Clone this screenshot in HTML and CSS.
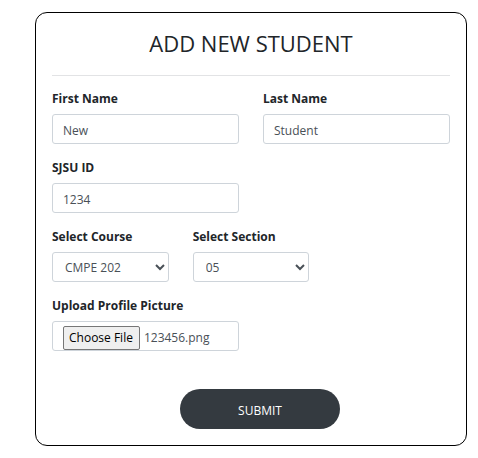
FILE: index.html
```html
<!DOCTYPE html>
<html lang="en">
<head>
  <meta charset="utf-8">
  <meta name="viewport" content="width=device-width, initial-scale=1">
  <title>Add New Student</title>
  <link rel="stylesheet" href="styles.css">
</head>
<body>
  <main class="card">
    <h1 class="title">ADD NEW STUDENT</h1>
    <form class="form">
      <div class="row halves">
        <div class="field">
          <label for="first-name">First Name</label>
          <input class="control" id="first-name" type="text" value="New">
        </div>
        <div class="field">
          <label for="last-name">Last Name</label>
          <input class="control" id="last-name" type="text" value="Student">
        </div>
      </div>
      <div class="row halves">
        <div class="field">
          <label for="sjsu-id">SJSU ID</label>
          <input class="control" id="sjsu-id" type="text" value="1234">
        </div>
      </div>
      <div class="row thirds">
        <div class="field">
          <label for="course">Select Course</label>
          <select class="control select" id="course"><option>CMPE 202</option></select>
        </div>
        <div class="field">
          <label for="section">Select Section</label>
          <select class="control select" id="section"><option>05</option></select>
        </div>
      </div>
      <div class="row halves">
        <div class="field">
          <label for="picture">Upload Profile Picture</label>
          <input class="control file" id="picture" type="file" accept="image/*">
        </div>
      </div>
      <button class="submit" type="submit">SUBMIT</button>
    </form>
  </main>
  <script src="script.js"></script>
</body>
</html>
```
FILE: styles.css
```css
* {
  box-sizing: border-box;
}

body {
  margin: 0;
  background: #fff;
  color: #212529;
  font-family: "Open Sans", "Noto Sans", sans-serif;
  font-size: 12px;
  line-height: 20px;
}

.card {
  margin: 12px 11px 12px 35px;
  padding: 16px;
  border: 1px solid #000;
  border-radius: 12px;
}

.title {
  margin: 0;
  padding-bottom: 18px;
  border-bottom: 1px solid #e2e3e5;
  font-size: 22px;
  font-weight: 500;
  line-height: 28px;
  text-align: center;
}

.form {
  display: flex;
  flex-direction: column;
  gap: 14px;
  padding-top: 13px;
}

.row {
  display: grid;
  column-gap: 24px;
}

.halves {
  grid-template-columns: repeat(2, 1fr);
}

.thirds {
  grid-template-columns: repeat(3, 1fr);
}

.field {
  display: flex;
  flex-direction: column;
  gap: 5px;
  min-width: 0;
}

label {
  font-weight: 700;
}

.control {
  width: 100%;
  height: 30px;
  padding: 5px 10px 3px;
  border: 1px solid #ced4da;
  border-radius: 3px;
  background: #fff;
  color: #495057;
  font: inherit;
}

.select {
  padding: 4px 0 4px 8px;
}

.file {
  padding: 4px 10px 0;
  line-height: 22px;
}

.file::file-selector-button {
  height: 24px;
  margin: 0 4px 0 0;
  padding: 0 6px 0 5px;
  border: 1px solid #767676;
  border-radius: 2px;
  background: #efefef;
  color: #000;
  font: inherit;
}

.submit {
  width: 160px;
  height: 40px;
  margin: 24px 0 0 128px;
  padding: 4px 0 0;
  border: 0;
  border-radius: 20px;
  background: #343a40;
  color: #fff;
  font: inherit;
}
```
FILE: script.js
```js
const picked = new DataTransfer();
picked.items.add(new File([""], "123456.png", { type: "image/png" }));
document.getElementById("picture").files = picked.files;
```
